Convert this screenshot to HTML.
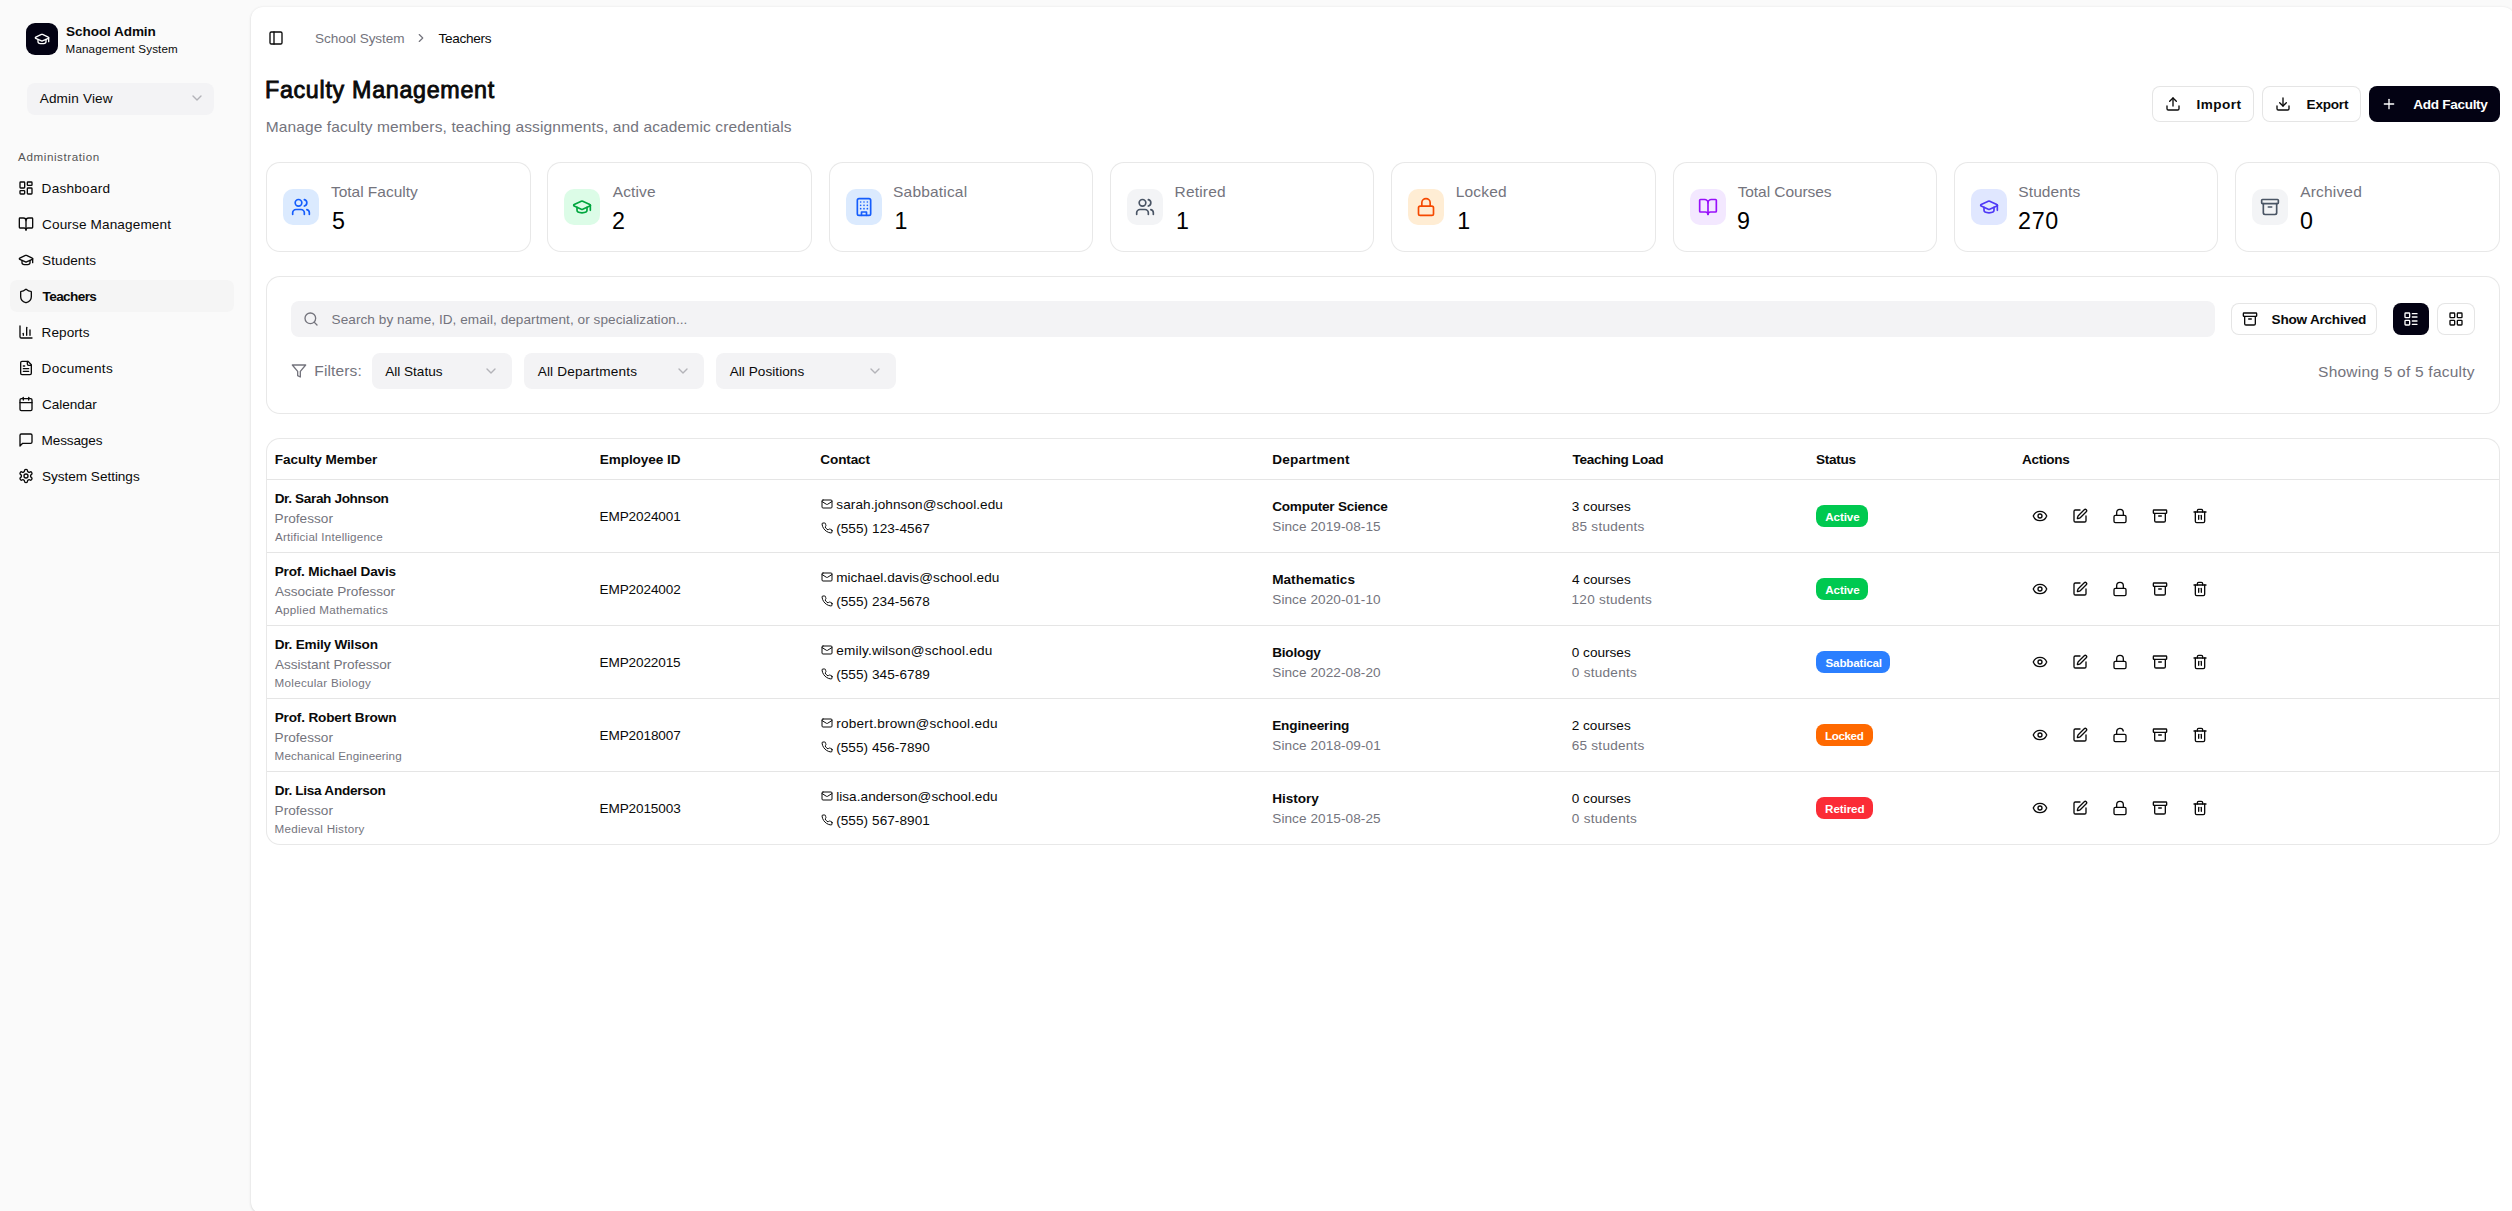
<!DOCTYPE html>
<html lang="en"><head><meta charset="utf-8"><title>Faculty Management</title>
<style>
*{box-sizing:border-box}
html,body{margin:0;padding:0}
body{width:2512px;height:1211px;overflow:hidden;position:relative;background:#fafafa;font-family:"Liberation Sans",sans-serif;font-size:14px;color:#0a0a0a}
.t{position:absolute;white-space:nowrap;line-height:20px;font-size:13.58px;font-weight:400;margin:0;padding:0;display:block;color:#0a0a0a;text-decoration:none}
.i{position:absolute;display:block}
.b{position:absolute}
.main{position:absolute;left:250.5px;top:6.5px;width:2264px;height:1207px;background:#fff;border-radius:12px;box-shadow:0 1px 3px rgba(0,0,0,.1),0 1px 2px -1px rgba(0,0,0,.1),0 0 3px rgba(0,0,0,.05)}
</style></head>
<body>
<aside aria-label="Sidebar">
<div class="b" style="left:26px;top:23px;width:32px;height:32px;background:#030213;border-radius:9px"></div>
<svg class="i" style="left:34px;top:31px;" width="16" height="16" viewBox="0 0 24 24" fill="none" stroke="#fff" stroke-width="2" stroke-linecap="round" stroke-linejoin="round"><path d="M21.42 10.922a1 1 0 0 0-.019-1.838L12.83 5.18a2 2 0 0 0-1.66 0L2.6 9.08a1 1 0 0 0 0 1.832l8.57 3.908a2 2 0 0 0 1.66 0z"/><path d="M22 10v6"/><path d="M6 12.5V16a6 3 0 0 0 12 0v-3.5"/></svg>
<span class="t" style="left:66.11px;top:22px;font-weight:700;letter-spacing:-0.095px;">School Admin</span>
<span class="t" style="left:65.55px;top:39px;font-size:11.64px;letter-spacing:0.149px;">Management System</span>
<div class="b" style="left:27px;top:83px;width:187px;height:32px;background:#f3f3f5;border-radius:8px"></div>
<span class="t" style="left:39.67px;top:89px;letter-spacing:0.171px;">Admin View</span>
<svg class="i" style="left:189px;top:90px;opacity:.5" width="16" height="16" viewBox="0 0 24 24" fill="none" stroke="#74747d" stroke-width="2" stroke-linecap="round" stroke-linejoin="round"><path d="m6 9 6 6 6-6"/></svg>
<span class="t" style="left:18.08px;top:147px;font-size:11.64px;color:#545454;letter-spacing:0.579px;">Administration</span>
<nav aria-label="Administration">
<div class="b" style="left:10px;top:280px;width:224px;height:32px;background:#f5f5f5;border-radius:7px"></div>
<svg class="i" style="left:18px;top:180px;" width="16" height="16" viewBox="0 0 24 24" fill="none" stroke="#0a0a0a" stroke-width="2" stroke-linecap="round" stroke-linejoin="round"><rect width="7" height="9" x="3" y="3" rx="1"/><rect width="7" height="5" x="14" y="3" rx="1"/><rect width="7" height="9" x="14" y="12" rx="1"/><rect width="7" height="5" x="3" y="16" rx="1"/></svg>
<a class="t" style="left:41.59px;top:179px;letter-spacing:0.256px;">Dashboard</a>
<svg class="i" style="left:18px;top:216px;" width="16" height="16" viewBox="0 0 24 24" fill="none" stroke="#0a0a0a" stroke-width="2" stroke-linecap="round" stroke-linejoin="round"><path d="M12 7v14"/><path d="M3 18a1 1 0 0 1-1-1V4a1 1 0 0 1 1-1h5a4 4 0 0 1 4 4 4 4 0 0 1 4-4h5a1 1 0 0 1 1 1v13a1 1 0 0 1-1 1h-6a3 3 0 0 0-3 3 3 3 0 0 0-3-3z"/></svg>
<a class="t" style="left:42.01px;top:215px;letter-spacing:0.136px;">Course Management</a>
<svg class="i" style="left:18px;top:252px;" width="16" height="16" viewBox="0 0 24 24" fill="none" stroke="#0a0a0a" stroke-width="2" stroke-linecap="round" stroke-linejoin="round"><path d="M21.42 10.922a1 1 0 0 0-.019-1.838L12.83 5.18a2 2 0 0 0-1.66 0L2.6 9.08a1 1 0 0 0 0 1.832l8.57 3.908a2 2 0 0 0 1.66 0z"/><path d="M22 10v6"/><path d="M6 12.5V16a6 3 0 0 0 12 0v-3.5"/></svg>
<a class="t" style="left:42.08px;top:251px;letter-spacing:0.057px;">Students</a>
<svg class="i" style="left:18px;top:288px;" width="16" height="16" viewBox="0 0 24 24" fill="none" stroke="#0a0a0a" stroke-width="2" stroke-linecap="round" stroke-linejoin="round"><path d="M20 13c0 5-3.5 7.5-7.66 8.95a1 1 0 0 1-.67-.01C7.5 20.5 4 18 4 13V6a1 1 0 0 1 1-1c2 0 4.5-1.2 6.24-2.72a1.17 1.17 0 0 1 1.52 0C14.51 3.81 17 5 19 5a1 1 0 0 1 1 1z"/></svg>
<a class="t" style="left:42.55px;top:287px;font-weight:700;letter-spacing:-0.616px;">Teachers</a>
<svg class="i" style="left:18px;top:324px;" width="16" height="16" viewBox="0 0 24 24" fill="none" stroke="#0a0a0a" stroke-width="2" stroke-linecap="round" stroke-linejoin="round"><path d="M3 3v16a2 2 0 0 0 2 2h16"/><path d="M18 17V9"/><path d="M13 17V5"/><path d="M8 17v-3"/></svg>
<a class="t" style="left:41.59px;top:323px;letter-spacing:0.060px;">Reports</a>
<svg class="i" style="left:18px;top:360px;" width="16" height="16" viewBox="0 0 24 24" fill="none" stroke="#0a0a0a" stroke-width="2" stroke-linecap="round" stroke-linejoin="round"><path d="M15 2H6a2 2 0 0 0-2 2v16a2 2 0 0 0 2 2h12a2 2 0 0 0 2-2V7Z"/><path d="M14 2v4a2 2 0 0 0 2 2h4"/><path d="M10 9H8"/><path d="M16 13H8"/><path d="M16 17H8"/></svg>
<a class="t" style="left:41.59px;top:359px;letter-spacing:0.302px;">Documents</a>
<svg class="i" style="left:18px;top:396px;" width="16" height="16" viewBox="0 0 24 24" fill="none" stroke="#0a0a0a" stroke-width="2" stroke-linecap="round" stroke-linejoin="round"><path d="M8 2v4"/><path d="M16 2v4"/><rect width="18" height="18" x="3" y="4" rx="2"/><path d="M3 10h18"/></svg>
<a class="t" style="left:42.01px;top:395px;letter-spacing:-0.056px;">Calendar</a>
<svg class="i" style="left:18px;top:432px;" width="16" height="16" viewBox="0 0 24 24" fill="none" stroke="#0a0a0a" stroke-width="2" stroke-linecap="round" stroke-linejoin="round"><path d="M21 15a2 2 0 0 1-2 2H7l-4 4V5a2 2 0 0 1 2-2h14a2 2 0 0 1 2 2z"/></svg>
<a class="t" style="left:41.59px;top:431px;letter-spacing:-0.141px;">Messages</a>
<svg class="i" style="left:18px;top:468px;" width="16" height="16" viewBox="0 0 24 24" fill="none" stroke="#0a0a0a" stroke-width="2" stroke-linecap="round" stroke-linejoin="round"><path d="M12.22 2h-.44a2 2 0 0 0-2 2v.18a2 2 0 0 1-1 1.73l-.43.25a2 2 0 0 1-2 0l-.15-.08a2 2 0 0 0-2.73.73l-.22.38a2 2 0 0 0 .73 2.73l.15.1a2 2 0 0 1 1 1.72v.51a2 2 0 0 1-1 1.74l-.15.09a2 2 0 0 0-.73 2.73l.22.38a2 2 0 0 0 2.73.73l.15-.08a2 2 0 0 1 2 0l.43.25a2 2 0 0 1 1 1.73V20a2 2 0 0 0 2 2h.44a2 2 0 0 0 2-2v-.18a2 2 0 0 1 1-1.73l.43-.25a2 2 0 0 1 2 0l.15.08a2 2 0 0 0 2.73-.73l.22-.39a2 2 0 0 0-.73-2.73l-.15-.08a2 2 0 0 1-1-1.74v-.5a2 2 0 0 1 1-1.74l.15-.09a2 2 0 0 0 .73-2.73l-.22-.38a2 2 0 0 0-2.73-.73l-.15.08a2 2 0 0 1-2 0l-.43-.25a2 2 0 0 1-1-1.73V4a2 2 0 0 0-2-2z"/><circle cx="12" cy="12" r="3"/></svg>
<a class="t" style="left:42.08px;top:467px;letter-spacing:-0.036px;">System Settings</a>
</nav></aside>
<main><div class="main"></div>
<header>
<svg class="i" style="left:268px;top:30px;" width="16" height="16" viewBox="0 0 24 24" fill="none" stroke="#0a0a0a" stroke-width="2" stroke-linecap="round" stroke-linejoin="round"><rect width="18" height="18" x="3" y="3" rx="2"/><path d="M9 3v18"/></svg>
<span class="t" style="left:315.08px;top:29px;color:#74747d;letter-spacing:-0.096px;">School System</span>
<svg class="i" style="left:414px;top:31px;" width="14" height="14" viewBox="0 0 24 24" fill="none" stroke="#74747d" stroke-width="2" stroke-linecap="round" stroke-linejoin="round"><path d="m9 18 6-6-6-6"/></svg>
<span class="t" style="left:438.39px;top:29px;letter-spacing:-0.259px;">Teachers</span>
</header><section aria-label="Page heading">
<h1 class="t" style="left:264.99px;top:80px;font-size:23.28px;-webkit-text-stroke:0.86px;letter-spacing:0.701px;">Faculty Management</h1>
<p class="t" style="left:265.63px;top:117px;font-size:15.52px;color:#74747d;letter-spacing:0.123px;">Manage faculty members, teaching assignments, and academic credentials</p>
<div class="b" style="left:2152px;top:86px;width:102px;height:36px;background:#fff;border:1px solid rgba(0,0,0,.1);border-radius:8px"></div>
<svg class="i" style="left:2165px;top:96px;" width="16" height="16" viewBox="0 0 24 24" fill="none" stroke="#0a0a0a" stroke-width="2" stroke-linecap="round" stroke-linejoin="round"><path d="M21 15v4a2 2 0 0 1-2 2H5a2 2 0 0 1-2-2v-4"/><polyline points="17 8 12 3 7 8"/><line x1="12" x2="12" y1="3" y2="15"/></svg>
<span class="t" style="left:2196.39px;top:95px;font-weight:700;letter-spacing:0.485px;">Import</span>
<div class="b" style="left:2262px;top:86px;width:99px;height:36px;background:#fff;border:1px solid rgba(0,0,0,.1);border-radius:8px"></div>
<svg class="i" style="left:2275px;top:96px;" width="16" height="16" viewBox="0 0 24 24" fill="none" stroke="#0a0a0a" stroke-width="2" stroke-linecap="round" stroke-linejoin="round"><path d="M21 15v4a2 2 0 0 1-2 2H5a2 2 0 0 1-2-2v-4"/><polyline points="7 10 12 15 17 10"/><line x1="12" x2="12" y1="15" y2="3"/></svg>
<span class="t" style="left:2306.59px;top:95px;font-weight:700;letter-spacing:-0.228px;">Export</span>
<div class="b" style="left:2369px;top:86px;width:131px;height:36px;background:#030213;border-radius:8px"></div>
<svg class="i" style="left:2381px;top:96px;" width="16" height="16" viewBox="0 0 24 24" fill="none" stroke="#fff" stroke-width="2" stroke-linecap="round" stroke-linejoin="round"><path d="M5 12h14"/><path d="M12 5v14"/></svg>
<span class="t" style="left:2413.26px;top:95px;font-weight:700;color:#fff;letter-spacing:-0.309px;">Add Faculty</span>
</section><section aria-label="Statistics">
<div class="b" style="left:266.0px;top:162px;width:264.6px;height:90px;border:1px solid rgba(0,0,0,.09);border-radius:14px;background:#fff"></div>
<div class="b" style="left:283.0px;top:189px;width:36px;height:36px;background:#dbeafe;border-radius:10px"></div>
<svg class="i" style="left:291.0px;top:197px;" width="20" height="20" viewBox="0 0 24 24" fill="none" stroke="#155dfc" stroke-width="2" stroke-linecap="round" stroke-linejoin="round"><path d="M16 21v-2a4 4 0 0 0-4-4H6a4 4 0 0 0-4 4v2"/><circle cx="9" cy="7" r="4"/><path d="M22 21v-2a4 4 0 0 0-3-3.87"/><path d="M16 3.13a4 4 0 0 1 0 7.75"/></svg>
<span class="t" style="left:330.95px;top:182px;font-size:15.52px;color:#74747d;letter-spacing:-0.026px;">Total Faculty</span>
<span class="t" style="left:331.97px;top:211px;font-size:23.28px;color:#000;letter-spacing:0.000px;">5</span>
<div class="b" style="left:547.3px;top:162px;width:264.6px;height:90px;border:1px solid rgba(0,0,0,.09);border-radius:14px;background:#fff"></div>
<div class="b" style="left:564.3px;top:189px;width:36px;height:36px;background:#dcfce7;border-radius:10px"></div>
<svg class="i" style="left:572.3px;top:197px;" width="20" height="20" viewBox="0 0 24 24" fill="none" stroke="#00a63e" stroke-width="2" stroke-linecap="round" stroke-linejoin="round"><path d="M21.42 10.922a1 1 0 0 0-.019-1.838L12.83 5.18a2 2 0 0 0-1.66 0L2.6 9.08a1 1 0 0 0 0 1.832l8.57 3.908a2 2 0 0 0 1.66 0z"/><path d="M22 10v6"/><path d="M6 12.5V16a6 3 0 0 0 12 0v-3.5"/></svg>
<span class="t" style="left:612.67px;top:182px;font-size:15.52px;color:#74747d;letter-spacing:0.151px;">Active</span>
<span class="t" style="left:612.03px;top:211px;font-size:23.28px;color:#000;letter-spacing:0.000px;">2</span>
<div class="b" style="left:828.6px;top:162px;width:264.6px;height:90px;border:1px solid rgba(0,0,0,.09);border-radius:14px;background:#fff"></div>
<div class="b" style="left:845.6px;top:189px;width:36px;height:36px;background:#dbeafe;border-radius:10px"></div>
<svg class="i" style="left:853.6px;top:197px;" width="20" height="20" viewBox="0 0 24 24" fill="none" stroke="#155dfc" stroke-width="2" stroke-linecap="round" stroke-linejoin="round"><rect width="16" height="20" x="4" y="2" rx="2" ry="2"/><path d="M9 22v-4h6v4"/><path d="M8 6h.01"/><path d="M16 6h.01"/><path d="M12 6h.01"/><path d="M12 10h.01"/><path d="M12 14h.01"/><path d="M16 10h.01"/><path d="M16 14h.01"/><path d="M8 10h.01"/><path d="M8 14h.01"/></svg>
<span class="t" style="left:893.10px;top:182px;font-size:15.52px;color:#74747d;letter-spacing:0.175px;">Sabbatical</span>
<span class="t" style="left:894.53px;top:211px;font-size:23.28px;color:#000;letter-spacing:0.000px;">1</span>
<div class="b" style="left:1109.9px;top:162px;width:264.6px;height:90px;border:1px solid rgba(0,0,0,.09);border-radius:14px;background:#fff"></div>
<div class="b" style="left:1126.9px;top:189px;width:36px;height:36px;background:#f3f4f6;border-radius:10px"></div>
<svg class="i" style="left:1134.9px;top:197px;" width="20" height="20" viewBox="0 0 24 24" fill="none" stroke="#4a5565" stroke-width="2" stroke-linecap="round" stroke-linejoin="round"><path d="M16 21v-2a4 4 0 0 0-4-4H6a4 4 0 0 0-4 4v2"/><circle cx="9" cy="7" r="4"/><path d="M22 21v-2a4 4 0 0 0-3-3.87"/><path d="M16 3.13a4 4 0 0 1 0 7.75"/></svg>
<span class="t" style="left:1174.53px;top:182px;font-size:15.52px;color:#74747d;letter-spacing:0.190px;">Retired</span>
<span class="t" style="left:1176.03px;top:211px;font-size:23.28px;color:#000;letter-spacing:0.000px;">1</span>
<div class="b" style="left:1391.2px;top:162px;width:264.6px;height:90px;border:1px solid rgba(0,0,0,.09);border-radius:14px;background:#fff"></div>
<div class="b" style="left:1408.2px;top:189px;width:36px;height:36px;background:#ffedd4;border-radius:10px"></div>
<svg class="i" style="left:1416.2px;top:197px;" width="20" height="20" viewBox="0 0 24 24" fill="none" stroke="#f54900" stroke-width="2" stroke-linecap="round" stroke-linejoin="round"><rect width="18" height="11" x="3" y="11" rx="2" ry="2"/><path d="M7 11V7a5 5 0 0 1 10 0v4"/></svg>
<span class="t" style="left:1455.63px;top:182px;font-size:15.52px;color:#74747d;letter-spacing:0.185px;">Locked</span>
<span class="t" style="left:1457.23px;top:211px;font-size:23.28px;color:#000;letter-spacing:0.000px;">1</span>
<div class="b" style="left:1672.5px;top:162px;width:264.6px;height:90px;border:1px solid rgba(0,0,0,.09);border-radius:14px;background:#fff"></div>
<div class="b" style="left:1689.5px;top:189px;width:36px;height:36px;background:#f3e8ff;border-radius:10px"></div>
<svg class="i" style="left:1697.5px;top:197px;" width="20" height="20" viewBox="0 0 24 24" fill="none" stroke="#9810fa" stroke-width="2" stroke-linecap="round" stroke-linejoin="round"><path d="M12 7v14"/><path d="M3 18a1 1 0 0 1-1-1V4a1 1 0 0 1 1-1h5a4 4 0 0 1 4 4 4 4 0 0 1 4-4h5a1 1 0 0 1 1 1v13a1 1 0 0 1-1 1h-6a3 3 0 0 0-3 3 3 3 0 0 0-3-3z"/></svg>
<span class="t" style="left:1737.65px;top:182px;font-size:15.52px;color:#74747d;letter-spacing:-0.079px;">Total Courses</span>
<span class="t" style="left:1736.91px;top:211px;font-size:23.28px;color:#000;letter-spacing:0.000px;">9</span>
<div class="b" style="left:1953.8px;top:162px;width:264.6px;height:90px;border:1px solid rgba(0,0,0,.09);border-radius:14px;background:#fff"></div>
<div class="b" style="left:1970.8px;top:189px;width:36px;height:36px;background:#e0e7ff;border-radius:10px"></div>
<svg class="i" style="left:1978.8px;top:197px;" width="20" height="20" viewBox="0 0 24 24" fill="none" stroke="#4f39f6" stroke-width="2" stroke-linecap="round" stroke-linejoin="round"><path d="M21.42 10.922a1 1 0 0 0-.019-1.838L12.83 5.18a2 2 0 0 0-1.66 0L2.6 9.08a1 1 0 0 0 0 1.832l8.57 3.908a2 2 0 0 0 1.66 0z"/><path d="M22 10v6"/><path d="M6 12.5V16a6 3 0 0 0 12 0v-3.5"/></svg>
<span class="t" style="left:2018.30px;top:182px;font-size:15.52px;color:#74747d;letter-spacing:0.088px;">Students</span>
<span class="t" style="left:2018.03px;top:211px;font-size:23.28px;color:#000;letter-spacing:0.676px;">270</span>
<div class="b" style="left:2235.1px;top:162px;width:264.6px;height:90px;border:1px solid rgba(0,0,0,.09);border-radius:14px;background:#fff"></div>
<div class="b" style="left:2252.1px;top:189px;width:36px;height:36px;background:#f3f4f6;border-radius:10px"></div>
<svg class="i" style="left:2260.1px;top:197px;" width="20" height="20" viewBox="0 0 24 24" fill="none" stroke="#4a5565" stroke-width="2" stroke-linecap="round" stroke-linejoin="round"><rect width="20" height="5" x="2" y="3" rx="1"/><path d="M4 8v11a2 2 0 0 0 2 2h12a2 2 0 0 0 2-2V8"/><path d="M10 12h4"/></svg>
<span class="t" style="left:2300.17px;top:182px;font-size:15.52px;color:#74747d;letter-spacing:0.179px;">Archived</span>
<span class="t" style="left:2299.99px;top:211px;font-size:23.28px;color:#000;letter-spacing:0.000px;">0</span>
</section><section aria-label="Search and filters">
<div class="b" style="left:266px;top:276px;width:2233.6px;height:138px;border:1px solid rgba(0,0,0,.09);border-radius:14px;background:#fff"></div>
<div class="b" style="left:291px;top:301px;width:1924px;height:36px;background:#f3f3f5;border-radius:8px"></div>
<svg class="i" style="left:303px;top:311px;" width="16" height="16" viewBox="0 0 24 24" fill="none" stroke="#74747d" stroke-width="2" stroke-linecap="round" stroke-linejoin="round"><circle cx="11" cy="11" r="8"/><path d="m21 21-4.3-4.3"/></svg>
<span class="t" style="left:331.58px;top:310px;color:#74747d;letter-spacing:0.057px;">Search by name, ID, email, department, or specialization...</span>
<div class="b" style="left:2231px;top:303px;width:146px;height:32px;background:#fff;border:1px solid rgba(0,0,0,.1);border-radius:8px"></div>
<svg class="i" style="left:2242px;top:311px;" width="16" height="16" viewBox="0 0 24 24" fill="none" stroke="#0a0a0a" stroke-width="2" stroke-linecap="round" stroke-linejoin="round"><rect width="20" height="5" x="2" y="3" rx="1"/><path d="M4 8v11a2 2 0 0 0 2 2h12a2 2 0 0 0 2-2V8"/><path d="M10 12h4"/></svg>
<span class="t" style="left:2271.61px;top:310px;font-weight:700;letter-spacing:-0.234px;">Show Archived</span>
<div class="b" style="left:2393px;top:303px;width:36px;height:32px;background:#030213;border-radius:8px"></div>
<svg class="i" style="left:2403px;top:311px;" width="16" height="16" viewBox="0 0 24 24" fill="none" stroke="#fff" stroke-width="2" stroke-linecap="round" stroke-linejoin="round"><rect width="7" height="7" x="3" y="3" rx="1"/><rect width="7" height="7" x="3" y="14" rx="1"/><path d="M14 4h7"/><path d="M14 9h7"/><path d="M14 15h7"/><path d="M14 20h7"/></svg>
<div class="b" style="left:2437px;top:303px;width:38px;height:32px;background:#fff;border:1px solid rgba(0,0,0,.1);border-radius:8px"></div>
<svg class="i" style="left:2448px;top:311px;" width="16" height="16" viewBox="0 0 24 24" fill="none" stroke="#0a0a0a" stroke-width="2" stroke-linecap="round" stroke-linejoin="round"><rect width="7" height="7" x="3" y="3" rx="1"/><rect width="7" height="7" x="14" y="3" rx="1"/><rect width="7" height="7" x="14" y="14" rx="1"/><rect width="7" height="7" x="3" y="14" rx="1"/></svg>
<svg class="i" style="left:291px;top:363px;" width="16" height="16" viewBox="0 0 24 24" fill="none" stroke="#74747d" stroke-width="2" stroke-linecap="round" stroke-linejoin="round"><polygon points="22 3 2 3 10 12.46 10 19 14 21 14 12.46 22 3"/></svg>
<span class="t" style="left:314.33px;top:361px;font-size:15.52px;color:#74747d;letter-spacing:0.118px;">Filters:</span>
<div class="b" style="left:372px;top:353px;width:140px;height:36px;background:#f3f3f5;border-radius:8px"></div>
<span class="t" style="left:385.27px;top:362px;letter-spacing:-0.016px;">All Status</span>
<svg class="i" style="left:483px;top:363px;opacity:.5" width="16" height="16" viewBox="0 0 24 24" fill="none" stroke="#74747d" stroke-width="2" stroke-linecap="round" stroke-linejoin="round"><path d="m6 9 6 6 6-6"/></svg>
<div class="b" style="left:524px;top:353px;width:180px;height:36px;background:#f3f3f5;border-radius:8px"></div>
<span class="t" style="left:537.67px;top:362px;letter-spacing:0.195px;">All Departments</span>
<svg class="i" style="left:675px;top:363px;opacity:.5" width="16" height="16" viewBox="0 0 24 24" fill="none" stroke="#74747d" stroke-width="2" stroke-linecap="round" stroke-linejoin="round"><path d="m6 9 6 6 6-6"/></svg>
<div class="b" style="left:716px;top:353px;width:180px;height:36px;background:#f3f3f5;border-radius:8px"></div>
<span class="t" style="left:729.67px;top:362px;letter-spacing:0.054px;">All Positions</span>
<svg class="i" style="left:867px;top:363px;opacity:.5" width="16" height="16" viewBox="0 0 24 24" fill="none" stroke="#74747d" stroke-width="2" stroke-linecap="round" stroke-linejoin="round"><path d="m6 9 6 6 6-6"/></svg>
<span class="t" style="left:2318.10px;top:362px;font-size:15.52px;color:#74747d;letter-spacing:0.220px;">Showing 5 of 5 faculty</span>
</section><section aria-label="Faculty table">
<div class="b" style="left:266px;top:438px;width:2233.6px;height:407px;border:1px solid rgba(0,0,0,.09);border-radius:14px;background:#fff"></div>
<span class="t" style="left:274.69px;top:450px;font-weight:700;letter-spacing:-0.059px;">Faculty Member</span>
<span class="t" style="left:599.69px;top:450px;font-weight:700;letter-spacing:-0.072px;">Employee ID</span>
<span class="t" style="left:820.34px;top:450px;font-weight:700;letter-spacing:-0.137px;">Contact</span>
<span class="t" style="left:1272.19px;top:450px;font-weight:700;letter-spacing:0.202px;">Department</span>
<span class="t" style="left:1572.45px;top:450px;font-weight:700;letter-spacing:-0.305px;">Teaching Load</span>
<span class="t" style="left:1816.01px;top:450px;font-weight:700;letter-spacing:-0.270px;">Status</span>
<span class="t" style="left:2022.06px;top:450px;font-weight:700;letter-spacing:-0.334px;">Actions</span>
<div class="b" style="left:267px;top:479px;width:2231.6px;height:1px;background:rgba(0,0,0,.1)"></div>
<div class="b" style="left:267px;top:552px;width:2231.6px;height:1px;background:rgba(0,0,0,.1)"></div>
<div class="b" style="left:267px;top:625px;width:2231.6px;height:1px;background:rgba(0,0,0,.1)"></div>
<div class="b" style="left:267px;top:698px;width:2231.6px;height:1px;background:rgba(0,0,0,.1)"></div>
<div class="b" style="left:267px;top:771px;width:2231.6px;height:1px;background:rgba(0,0,0,.1)"></div>
<span class="t" style="left:274.64px;top:489px;font-weight:700;letter-spacing:-0.355px;">Dr. Sarah Johnson</span>
<span class="t" style="left:274.55px;top:509px;color:#74747d;letter-spacing:0.033px;">Professor</span>
<span class="t" style="left:274.99px;top:527px;font-size:11.64px;color:#74747d;letter-spacing:0.222px;">Artificial Intelligence</span>
<span class="t" style="left:599.55px;top:507px;letter-spacing:-0.121px;">EMP2024001</span>
<svg class="i" style="left:821px;top:498px;" width="12" height="12" viewBox="0 0 24 24" fill="none" stroke="#0a0a0a" stroke-width="2" stroke-linecap="round" stroke-linejoin="round"><rect width="20" height="16" x="2" y="4" rx="2"/><path d="m22 7-8.97 5.7a1.94 1.94 0 0 1-2.06 0L2 7"/></svg>
<span class="t" style="left:836.35px;top:495px;letter-spacing:0.078px;">sarah.johnson@school.edu</span>
<svg class="i" style="left:821px;top:522px;" width="12" height="12" viewBox="0 0 24 24" fill="none" stroke="#0a0a0a" stroke-width="2" stroke-linecap="round" stroke-linejoin="round"><path d="M22 16.92v3a2 2 0 0 1-2.18 2 19.79 19.79 0 0 1-8.63-3.07 19.5 19.5 0 0 1-6-6 19.79 19.79 0 0 1-3.07-8.67A2 2 0 0 1 4.11 2h3a2 2 0 0 1 2 1.72 12.84 12.84 0 0 0 .7 2.81 2 2 0 0 1-.45 2.11L8.09 9.91a16 16 0 0 0 6 6l1.27-1.27a2 2 0 0 1 2.11-.45 12.84 12.84 0 0 0 2.81.7A2 2 0 0 1 22 16.92z"/></svg>
<span class="t" style="left:836.16px;top:519px;letter-spacing:0.066px;">(555) 123-4567</span>
<span class="t" style="left:1272.28px;top:497px;font-weight:700;letter-spacing:-0.250px;">Computer Science</span>
<span class="t" style="left:1272.25px;top:517px;color:#74747d;letter-spacing:0.081px;">Since 2019-08-15</span>
<span class="t" style="left:1571.79px;top:497px;letter-spacing:0.003px;">3 courses</span>
<span class="t" style="left:1571.76px;top:517px;color:#74747d;letter-spacing:0.241px;">85 students</span>
<div class="b" style="left:1816px;top:505px;width:52px;height:22px;background:#00c950;border-radius:8px"></div>
<span class="t" style="left:1825.31px;top:507px;font-size:11.64px;font-weight:700;color:#fff;letter-spacing:-0.104px;">Active</span>
<svg class="i" style="left:2032px;top:508px;" width="16" height="16" viewBox="0 0 24 24" fill="none" stroke="#0a0a0a" stroke-width="2" stroke-linecap="round" stroke-linejoin="round"><path d="M2.062 12.348a1 1 0 0 1 0-.696 10.75 10.75 0 0 1 19.876 0 1 1 0 0 1 0 .696 10.75 10.75 0 0 1-19.876 0"/><circle cx="12" cy="12" r="3"/></svg>
<svg class="i" style="left:2072px;top:508px;" width="16" height="16" viewBox="0 0 24 24" fill="none" stroke="#0a0a0a" stroke-width="2" stroke-linecap="round" stroke-linejoin="round"><path d="M12 3H5a2 2 0 0 0-2 2v14a2 2 0 0 0 2 2h14a2 2 0 0 0 2-2v-7"/><path d="M18.375 2.625a1 1 0 0 1 3 3l-9.013 9.014a2 2 0 0 1-.853.505l-2.873.84a.5.5 0 0 1-.62-.62l.84-2.873a2 2 0 0 1 .506-.852z"/></svg>
<svg class="i" style="left:2112px;top:508px;" width="16" height="16" viewBox="0 0 24 24" fill="none" stroke="#0a0a0a" stroke-width="2" stroke-linecap="round" stroke-linejoin="round"><rect width="18" height="11" x="3" y="11" rx="2" ry="2"/><path d="M7 11V7a5 5 0 0 1 10 0v4"/></svg>
<svg class="i" style="left:2152px;top:508px;" width="16" height="16" viewBox="0 0 24 24" fill="none" stroke="#0a0a0a" stroke-width="2" stroke-linecap="round" stroke-linejoin="round"><rect width="20" height="5" x="2" y="3" rx="1"/><path d="M4 8v11a2 2 0 0 0 2 2h12a2 2 0 0 0 2-2V8"/><path d="M10 12h4"/></svg>
<svg class="i" style="left:2192px;top:508px;" width="16" height="16" viewBox="0 0 24 24" fill="none" stroke="#0a0a0a" stroke-width="2" stroke-linecap="round" stroke-linejoin="round"><path d="M3 6h18"/><path d="M19 6v14c0 1-1 2-2 2H7c-1 0-2-1-2-2V6"/><path d="M8 6V4c0-1 1-2 2-2h4c1 0 2 1 2 2v2"/><line x1="10" x2="10" y1="11" y2="17"/><line x1="14" x2="14" y1="11" y2="17"/></svg>
<span class="t" style="left:274.64px;top:562px;font-weight:700;letter-spacing:-0.166px;">Prof. Michael Davis</span>
<span class="t" style="left:274.99px;top:582px;color:#74747d;letter-spacing:-0.034px;">Associate Professor</span>
<span class="t" style="left:274.99px;top:600px;font-size:11.64px;color:#74747d;letter-spacing:0.274px;">Applied Mathematics</span>
<span class="t" style="left:599.55px;top:580px;letter-spacing:-0.119px;">EMP2024002</span>
<svg class="i" style="left:821px;top:571px;" width="12" height="12" viewBox="0 0 24 24" fill="none" stroke="#0a0a0a" stroke-width="2" stroke-linecap="round" stroke-linejoin="round"><rect width="20" height="16" x="2" y="4" rx="2"/><path d="m22 7-8.97 5.7a1.94 1.94 0 0 1-2.06 0L2 7"/></svg>
<span class="t" style="left:836.14px;top:568px;letter-spacing:0.063px;">michael.davis@school.edu</span>
<svg class="i" style="left:821px;top:595px;" width="12" height="12" viewBox="0 0 24 24" fill="none" stroke="#0a0a0a" stroke-width="2" stroke-linecap="round" stroke-linejoin="round"><path d="M22 16.92v3a2 2 0 0 1-2.18 2 19.79 19.79 0 0 1-8.63-3.07 19.5 19.5 0 0 1-6-6 19.79 19.79 0 0 1-3.07-8.67A2 2 0 0 1 4.11 2h3a2 2 0 0 1 2 1.72 12.84 12.84 0 0 0 .7 2.81 2 2 0 0 1-.45 2.11L8.09 9.91a16 16 0 0 0 6 6l1.27-1.27a2 2 0 0 1 2.11-.45 12.84 12.84 0 0 0 2.81.7A2 2 0 0 1 22 16.92z"/></svg>
<span class="t" style="left:836.16px;top:592px;letter-spacing:0.059px;">(555) 234-5678</span>
<span class="t" style="left:1272.14px;top:570px;font-weight:700;letter-spacing:0.065px;">Mathematics</span>
<span class="t" style="left:1272.25px;top:590px;color:#74747d;letter-spacing:0.078px;">Since 2020-01-10</span>
<span class="t" style="left:1571.88px;top:570px;letter-spacing:-0.007px;">4 courses</span>
<span class="t" style="left:1571.59px;top:590px;color:#74747d;letter-spacing:0.231px;">120 students</span>
<div class="b" style="left:1816px;top:578px;width:52px;height:22px;background:#00c950;border-radius:8px"></div>
<span class="t" style="left:1825.31px;top:580px;font-size:11.64px;font-weight:700;color:#fff;letter-spacing:-0.104px;">Active</span>
<svg class="i" style="left:2032px;top:581px;" width="16" height="16" viewBox="0 0 24 24" fill="none" stroke="#0a0a0a" stroke-width="2" stroke-linecap="round" stroke-linejoin="round"><path d="M2.062 12.348a1 1 0 0 1 0-.696 10.75 10.75 0 0 1 19.876 0 1 1 0 0 1 0 .696 10.75 10.75 0 0 1-19.876 0"/><circle cx="12" cy="12" r="3"/></svg>
<svg class="i" style="left:2072px;top:581px;" width="16" height="16" viewBox="0 0 24 24" fill="none" stroke="#0a0a0a" stroke-width="2" stroke-linecap="round" stroke-linejoin="round"><path d="M12 3H5a2 2 0 0 0-2 2v14a2 2 0 0 0 2 2h14a2 2 0 0 0 2-2v-7"/><path d="M18.375 2.625a1 1 0 0 1 3 3l-9.013 9.014a2 2 0 0 1-.853.505l-2.873.84a.5.5 0 0 1-.62-.62l.84-2.873a2 2 0 0 1 .506-.852z"/></svg>
<svg class="i" style="left:2112px;top:581px;" width="16" height="16" viewBox="0 0 24 24" fill="none" stroke="#0a0a0a" stroke-width="2" stroke-linecap="round" stroke-linejoin="round"><rect width="18" height="11" x="3" y="11" rx="2" ry="2"/><path d="M7 11V7a5 5 0 0 1 10 0v4"/></svg>
<svg class="i" style="left:2152px;top:581px;" width="16" height="16" viewBox="0 0 24 24" fill="none" stroke="#0a0a0a" stroke-width="2" stroke-linecap="round" stroke-linejoin="round"><rect width="20" height="5" x="2" y="3" rx="1"/><path d="M4 8v11a2 2 0 0 0 2 2h12a2 2 0 0 0 2-2V8"/><path d="M10 12h4"/></svg>
<svg class="i" style="left:2192px;top:581px;" width="16" height="16" viewBox="0 0 24 24" fill="none" stroke="#0a0a0a" stroke-width="2" stroke-linecap="round" stroke-linejoin="round"><path d="M3 6h18"/><path d="M19 6v14c0 1-1 2-2 2H7c-1 0-2-1-2-2V6"/><path d="M8 6V4c0-1 1-2 2-2h4c1 0 2 1 2 2v2"/><line x1="10" x2="10" y1="11" y2="17"/><line x1="14" x2="14" y1="11" y2="17"/></svg>
<span class="t" style="left:274.64px;top:635px;font-weight:700;letter-spacing:-0.197px;">Dr. Emily Wilson</span>
<span class="t" style="left:274.99px;top:655px;color:#74747d;letter-spacing:-0.041px;">Assistant Professor</span>
<span class="t" style="left:274.62px;top:673px;font-size:11.64px;color:#74747d;letter-spacing:0.271px;">Molecular Biology</span>
<span class="t" style="left:599.55px;top:653px;letter-spacing:-0.131px;">EMP2022015</span>
<svg class="i" style="left:821px;top:644px;" width="12" height="12" viewBox="0 0 24 24" fill="none" stroke="#0a0a0a" stroke-width="2" stroke-linecap="round" stroke-linejoin="round"><rect width="20" height="16" x="2" y="4" rx="2"/><path d="m22 7-8.97 5.7a1.94 1.94 0 0 1-2.06 0L2 7"/></svg>
<span class="t" style="left:836.27px;top:641px;letter-spacing:0.195px;">emily.wilson@school.edu</span>
<svg class="i" style="left:821px;top:668px;" width="12" height="12" viewBox="0 0 24 24" fill="none" stroke="#0a0a0a" stroke-width="2" stroke-linecap="round" stroke-linejoin="round"><path d="M22 16.92v3a2 2 0 0 1-2.18 2 19.79 19.79 0 0 1-8.63-3.07 19.5 19.5 0 0 1-6-6 19.79 19.79 0 0 1-3.07-8.67A2 2 0 0 1 4.11 2h3a2 2 0 0 1 2 1.72 12.84 12.84 0 0 0 .7 2.81 2 2 0 0 1-.45 2.11L8.09 9.91a16 16 0 0 0 6 6l1.27-1.27a2 2 0 0 1 2.11-.45 12.84 12.84 0 0 0 2.81.7A2 2 0 0 1 22 16.92z"/></svg>
<span class="t" style="left:836.16px;top:665px;letter-spacing:0.063px;">(555) 345-6789</span>
<span class="t" style="left:1272.14px;top:643px;font-weight:700;letter-spacing:-0.177px;">Biology</span>
<span class="t" style="left:1272.25px;top:663px;color:#74747d;letter-spacing:0.078px;">Since 2022-08-20</span>
<span class="t" style="left:1571.79px;top:643px;letter-spacing:0.003px;">0 courses</span>
<span class="t" style="left:1571.79px;top:663px;color:#74747d;letter-spacing:0.261px;">0 students</span>
<div class="b" style="left:1816px;top:651px;width:74px;height:22px;background:#2b7fff;border-radius:8px"></div>
<span class="t" style="left:1825.56px;top:653px;font-size:11.64px;font-weight:700;color:#fff;letter-spacing:-0.177px;">Sabbatical</span>
<svg class="i" style="left:2032px;top:654px;" width="16" height="16" viewBox="0 0 24 24" fill="none" stroke="#0a0a0a" stroke-width="2" stroke-linecap="round" stroke-linejoin="round"><path d="M2.062 12.348a1 1 0 0 1 0-.696 10.75 10.75 0 0 1 19.876 0 1 1 0 0 1 0 .696 10.75 10.75 0 0 1-19.876 0"/><circle cx="12" cy="12" r="3"/></svg>
<svg class="i" style="left:2072px;top:654px;" width="16" height="16" viewBox="0 0 24 24" fill="none" stroke="#0a0a0a" stroke-width="2" stroke-linecap="round" stroke-linejoin="round"><path d="M12 3H5a2 2 0 0 0-2 2v14a2 2 0 0 0 2 2h14a2 2 0 0 0 2-2v-7"/><path d="M18.375 2.625a1 1 0 0 1 3 3l-9.013 9.014a2 2 0 0 1-.853.505l-2.873.84a.5.5 0 0 1-.62-.62l.84-2.873a2 2 0 0 1 .506-.852z"/></svg>
<svg class="i" style="left:2112px;top:654px;" width="16" height="16" viewBox="0 0 24 24" fill="none" stroke="#0a0a0a" stroke-width="2" stroke-linecap="round" stroke-linejoin="round"><rect width="18" height="11" x="3" y="11" rx="2" ry="2"/><path d="M7 11V7a5 5 0 0 1 10 0v4"/></svg>
<svg class="i" style="left:2152px;top:654px;" width="16" height="16" viewBox="0 0 24 24" fill="none" stroke="#0a0a0a" stroke-width="2" stroke-linecap="round" stroke-linejoin="round"><rect width="20" height="5" x="2" y="3" rx="1"/><path d="M4 8v11a2 2 0 0 0 2 2h12a2 2 0 0 0 2-2V8"/><path d="M10 12h4"/></svg>
<svg class="i" style="left:2192px;top:654px;" width="16" height="16" viewBox="0 0 24 24" fill="none" stroke="#0a0a0a" stroke-width="2" stroke-linecap="round" stroke-linejoin="round"><path d="M3 6h18"/><path d="M19 6v14c0 1-1 2-2 2H7c-1 0-2-1-2-2V6"/><path d="M8 6V4c0-1 1-2 2-2h4c1 0 2 1 2 2v2"/><line x1="10" x2="10" y1="11" y2="17"/><line x1="14" x2="14" y1="11" y2="17"/></svg>
<span class="t" style="left:274.64px;top:708px;font-weight:700;letter-spacing:-0.157px;">Prof. Robert Brown</span>
<span class="t" style="left:274.55px;top:728px;color:#74747d;letter-spacing:0.033px;">Professor</span>
<span class="t" style="left:274.62px;top:746px;font-size:11.64px;color:#74747d;letter-spacing:0.141px;">Mechanical Engineering</span>
<span class="t" style="left:599.55px;top:726px;letter-spacing:-0.119px;">EMP2018007</span>
<svg class="i" style="left:821px;top:717px;" width="12" height="12" viewBox="0 0 24 24" fill="none" stroke="#0a0a0a" stroke-width="2" stroke-linecap="round" stroke-linejoin="round"><rect width="20" height="16" x="2" y="4" rx="2"/><path d="m22 7-8.97 5.7a1.94 1.94 0 0 1-2.06 0L2 7"/></svg>
<span class="t" style="left:836.14px;top:714px;letter-spacing:0.263px;">robert.brown@school.edu</span>
<svg class="i" style="left:821px;top:741px;" width="12" height="12" viewBox="0 0 24 24" fill="none" stroke="#0a0a0a" stroke-width="2" stroke-linecap="round" stroke-linejoin="round"><path d="M22 16.92v3a2 2 0 0 1-2.18 2 19.79 19.79 0 0 1-8.63-3.07 19.5 19.5 0 0 1-6-6 19.79 19.79 0 0 1-3.07-8.67A2 2 0 0 1 4.11 2h3a2 2 0 0 1 2 1.72 12.84 12.84 0 0 0 .7 2.81 2 2 0 0 1-.45 2.11L8.09 9.91a16 16 0 0 0 6 6l1.27-1.27a2 2 0 0 1 2.11-.45 12.84 12.84 0 0 0 2.81.7A2 2 0 0 1 22 16.92z"/></svg>
<span class="t" style="left:836.16px;top:738px;letter-spacing:0.054px;">(555) 456-7890</span>
<span class="t" style="left:1272.14px;top:716px;font-weight:700;letter-spacing:-0.120px;">Engineering</span>
<span class="t" style="left:1272.25px;top:736px;color:#74747d;letter-spacing:0.087px;">Since 2018-09-01</span>
<span class="t" style="left:1571.73px;top:716px;letter-spacing:0.011px;">2 courses</span>
<span class="t" style="left:1571.72px;top:736px;color:#74747d;letter-spacing:0.245px;">65 students</span>
<div class="b" style="left:1816px;top:724px;width:57px;height:22px;background:#ff6900;border-radius:8px"></div>
<span class="t" style="left:1825.12px;top:726px;font-size:11.64px;font-weight:700;color:#fff;letter-spacing:-0.411px;">Locked</span>
<svg class="i" style="left:2032px;top:727px;" width="16" height="16" viewBox="0 0 24 24" fill="none" stroke="#0a0a0a" stroke-width="2" stroke-linecap="round" stroke-linejoin="round"><path d="M2.062 12.348a1 1 0 0 1 0-.696 10.75 10.75 0 0 1 19.876 0 1 1 0 0 1 0 .696 10.75 10.75 0 0 1-19.876 0"/><circle cx="12" cy="12" r="3"/></svg>
<svg class="i" style="left:2072px;top:727px;" width="16" height="16" viewBox="0 0 24 24" fill="none" stroke="#0a0a0a" stroke-width="2" stroke-linecap="round" stroke-linejoin="round"><path d="M12 3H5a2 2 0 0 0-2 2v14a2 2 0 0 0 2 2h14a2 2 0 0 0 2-2v-7"/><path d="M18.375 2.625a1 1 0 0 1 3 3l-9.013 9.014a2 2 0 0 1-.853.505l-2.873.84a.5.5 0 0 1-.62-.62l.84-2.873a2 2 0 0 1 .506-.852z"/></svg>
<svg class="i" style="left:2112px;top:727px;" width="16" height="16" viewBox="0 0 24 24" fill="none" stroke="#0a0a0a" stroke-width="2" stroke-linecap="round" stroke-linejoin="round"><rect width="18" height="11" x="3" y="11" rx="2" ry="2"/><path d="M7 11V7a5 5 0 0 1 9.9-1"/></svg>
<svg class="i" style="left:2152px;top:727px;" width="16" height="16" viewBox="0 0 24 24" fill="none" stroke="#0a0a0a" stroke-width="2" stroke-linecap="round" stroke-linejoin="round"><rect width="20" height="5" x="2" y="3" rx="1"/><path d="M4 8v11a2 2 0 0 0 2 2h12a2 2 0 0 0 2-2V8"/><path d="M10 12h4"/></svg>
<svg class="i" style="left:2192px;top:727px;" width="16" height="16" viewBox="0 0 24 24" fill="none" stroke="#0a0a0a" stroke-width="2" stroke-linecap="round" stroke-linejoin="round"><path d="M3 6h18"/><path d="M19 6v14c0 1-1 2-2 2H7c-1 0-2-1-2-2V6"/><path d="M8 6V4c0-1 1-2 2-2h4c1 0 2 1 2 2v2"/><line x1="10" x2="10" y1="11" y2="17"/><line x1="14" x2="14" y1="11" y2="17"/></svg>
<span class="t" style="left:274.64px;top:781px;font-weight:700;letter-spacing:-0.287px;">Dr. Lisa Anderson</span>
<span class="t" style="left:274.55px;top:801px;color:#74747d;letter-spacing:0.033px;">Professor</span>
<span class="t" style="left:274.62px;top:819px;font-size:11.64px;color:#74747d;letter-spacing:0.252px;">Medieval History</span>
<span class="t" style="left:599.55px;top:799px;letter-spacing:-0.128px;">EMP2015003</span>
<svg class="i" style="left:821px;top:790px;" width="12" height="12" viewBox="0 0 24 24" fill="none" stroke="#0a0a0a" stroke-width="2" stroke-linecap="round" stroke-linejoin="round"><rect width="20" height="16" x="2" y="4" rx="2"/><path d="m22 7-8.97 5.7a1.94 1.94 0 0 1-2.06 0L2 7"/></svg>
<span class="t" style="left:836.13px;top:787px;letter-spacing:0.054px;">lisa.anderson@school.edu</span>
<svg class="i" style="left:821px;top:814px;" width="12" height="12" viewBox="0 0 24 24" fill="none" stroke="#0a0a0a" stroke-width="2" stroke-linecap="round" stroke-linejoin="round"><path d="M22 16.92v3a2 2 0 0 1-2.18 2 19.79 19.79 0 0 1-8.63-3.07 19.5 19.5 0 0 1-6-6 19.79 19.79 0 0 1-3.07-8.67A2 2 0 0 1 4.11 2h3a2 2 0 0 1 2 1.72 12.84 12.84 0 0 0 .7 2.81 2 2 0 0 1-.45 2.11L8.09 9.91a16 16 0 0 0 6 6l1.27-1.27a2 2 0 0 1 2.11-.45 12.84 12.84 0 0 0 2.81.7A2 2 0 0 1 22 16.92z"/></svg>
<span class="t" style="left:836.16px;top:811px;letter-spacing:0.065px;">(555) 567-8901</span>
<span class="t" style="left:1272.14px;top:789px;font-weight:700;letter-spacing:-0.007px;">History</span>
<span class="t" style="left:1272.25px;top:809px;color:#74747d;letter-spacing:0.081px;">Since 2015-08-25</span>
<span class="t" style="left:1571.79px;top:789px;letter-spacing:0.003px;">0 courses</span>
<span class="t" style="left:1571.79px;top:809px;color:#74747d;letter-spacing:0.261px;">0 students</span>
<div class="b" style="left:1816px;top:797px;width:57px;height:22px;background:#fb2c36;border-radius:8px"></div>
<span class="t" style="left:1825.12px;top:799px;font-size:11.64px;font-weight:700;color:#fff;letter-spacing:-0.103px;">Retired</span>
<svg class="i" style="left:2032px;top:800px;" width="16" height="16" viewBox="0 0 24 24" fill="none" stroke="#0a0a0a" stroke-width="2" stroke-linecap="round" stroke-linejoin="round"><path d="M2.062 12.348a1 1 0 0 1 0-.696 10.75 10.75 0 0 1 19.876 0 1 1 0 0 1 0 .696 10.75 10.75 0 0 1-19.876 0"/><circle cx="12" cy="12" r="3"/></svg>
<svg class="i" style="left:2072px;top:800px;" width="16" height="16" viewBox="0 0 24 24" fill="none" stroke="#0a0a0a" stroke-width="2" stroke-linecap="round" stroke-linejoin="round"><path d="M12 3H5a2 2 0 0 0-2 2v14a2 2 0 0 0 2 2h14a2 2 0 0 0 2-2v-7"/><path d="M18.375 2.625a1 1 0 0 1 3 3l-9.013 9.014a2 2 0 0 1-.853.505l-2.873.84a.5.5 0 0 1-.62-.62l.84-2.873a2 2 0 0 1 .506-.852z"/></svg>
<svg class="i" style="left:2112px;top:800px;" width="16" height="16" viewBox="0 0 24 24" fill="none" stroke="#0a0a0a" stroke-width="2" stroke-linecap="round" stroke-linejoin="round"><rect width="18" height="11" x="3" y="11" rx="2" ry="2"/><path d="M7 11V7a5 5 0 0 1 10 0v4"/></svg>
<svg class="i" style="left:2152px;top:800px;" width="16" height="16" viewBox="0 0 24 24" fill="none" stroke="#0a0a0a" stroke-width="2" stroke-linecap="round" stroke-linejoin="round"><rect width="20" height="5" x="2" y="3" rx="1"/><path d="M4 8v11a2 2 0 0 0 2 2h12a2 2 0 0 0 2-2V8"/><path d="M10 12h4"/></svg>
<svg class="i" style="left:2192px;top:800px;" width="16" height="16" viewBox="0 0 24 24" fill="none" stroke="#0a0a0a" stroke-width="2" stroke-linecap="round" stroke-linejoin="round"><path d="M3 6h18"/><path d="M19 6v14c0 1-1 2-2 2H7c-1 0-2-1-2-2V6"/><path d="M8 6V4c0-1 1-2 2-2h4c1 0 2 1 2 2v2"/><line x1="10" x2="10" y1="11" y2="17"/><line x1="14" x2="14" y1="11" y2="17"/></svg>
</section></main>
</body></html>
